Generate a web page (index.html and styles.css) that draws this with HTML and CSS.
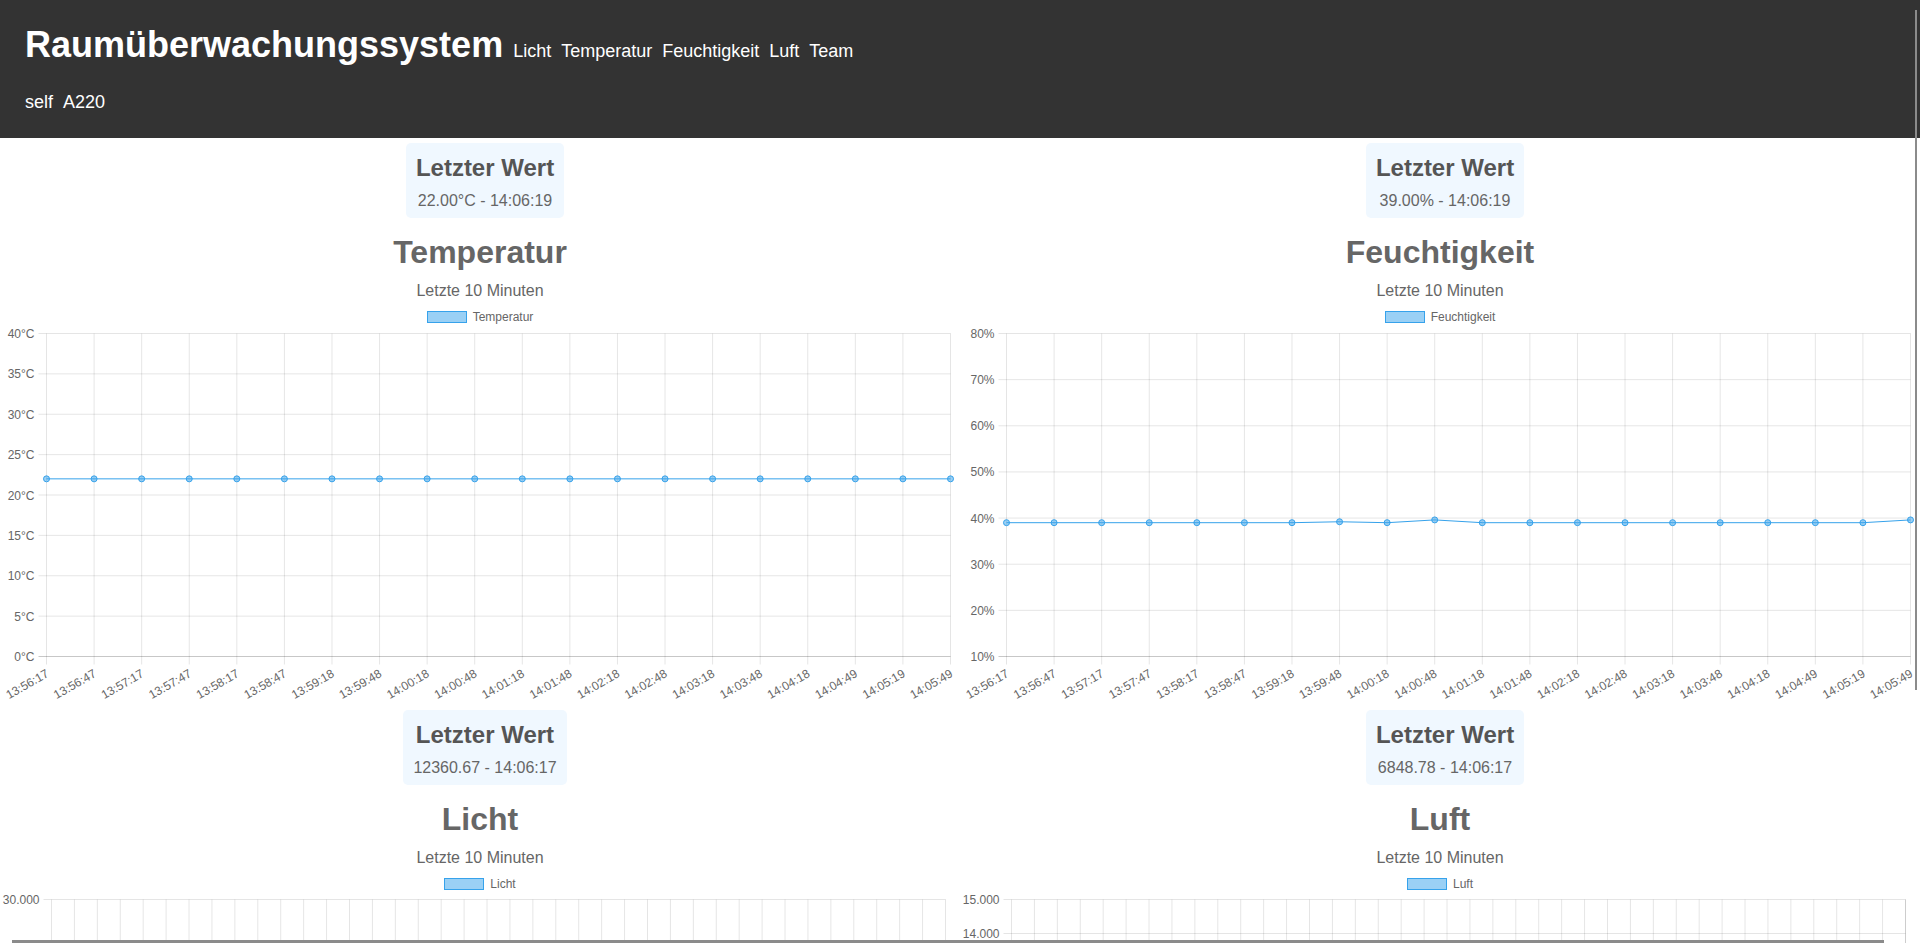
FILE: index.html
```html
<!DOCTYPE html>
<html lang="de">
<head>
<meta charset="utf-8">
<title>Raumüberwachungssystem</title>
<link rel="stylesheet" href="styles.css">
</head>
<body>
<header class="topbar">
  <div class="topbar-row">
    <h1 class="brand">Raumüberwachungssystem</h1>
    <nav class="nav">
      <a href="#licht">Licht</a>
      <a href="#temperatur">Temperatur</a>
      <a href="#feuchtigkeit">Feuchtigkeit</a>
      <a href="#luft">Luft</a>
      <a href="#team">Team</a>
    </nav>
  </div>
  <div class="topbar-row topbar-sub">
    <a href="#self">self</a>
    <a href="#a220">A220</a>
  </div>
</header>
<main class="dashboard">
  <section class="panel" id="temperatur">
    <div class="latest"><h3>Letzter Wert</h3><p>22.00°C - 14:06:19</p></div>
    <h2 class="chart-title">Temperatur</h2>
    <p class="chart-sub">Letzte 10 Minuten</p>
    <div class="legend"><span class="swatch"></span><span>Temperatur</span></div>
    <svg class="chart" id="chart-temp" viewBox="0 0 960 381" width="960" height="381"></svg>
  </section>
  <section class="panel" id="feuchtigkeit">
    <div class="latest"><h3>Letzter Wert</h3><p>39.00% - 14:06:19</p></div>
    <h2 class="chart-title">Feuchtigkeit</h2>
    <p class="chart-sub">Letzte 10 Minuten</p>
    <div class="legend"><span class="swatch"></span><span>Feuchtigkeit</span></div>
    <svg class="chart" id="chart-hum" viewBox="0 0 960 381" width="960" height="381"></svg>
  </section>
  <section class="panel" id="licht">
    <div class="latest"><h3>Letzter Wert</h3><p>12360.67 - 14:06:17</p></div>
    <h2 class="chart-title">Licht</h2>
    <p class="chart-sub">Letzte 10 Minuten</p>
    <div class="legend"><span class="swatch"></span><span>Licht</span></div>
    <svg class="chart chart-clipped" id="chart-licht" viewBox="0 0 960 52" width="960" height="52"></svg>
  </section>
  <section class="panel" id="luft">
    <div class="latest"><h3>Letzter Wert</h3><p>6848.78 - 14:06:17</p></div>
    <h2 class="chart-title">Luft</h2>
    <p class="chart-sub">Letzte 10 Minuten</p>
    <div class="legend"><span class="swatch"></span><span>Luft</span></div>
    <svg class="chart chart-clipped" id="chart-luft" viewBox="0 0 960 52" width="960" height="52"></svg>
  </section>
</main>
<div class="scroll-thumb scroll-v"></div>
<div class="scroll-thumb scroll-h"></div>
<script src="app.js"></script>
</body>
</html>
```

FILE: styles.css
```css
html {
  overflow: hidden;
}
body {
  margin: 0;
  font-family: "Liberation Sans", Arial, sans-serif;
  background: #fff;
  color: #666;
}
.topbar {
  background: #333;
  color: #fff;
  padding: 20px 25px 24px;
  height: 138px;
  box-sizing: border-box;
}
.topbar-row {
  display: flex;
  align-items: baseline;
}
.brand {
  margin: 0;
  font-size: 36px;
  line-height: 50px;
  font-weight: bold;
}
.nav {
  display: flex;
  gap: 10px;
  margin-left: 10px;
}
.topbar a {
  color: #fff;
  text-decoration: none;
  font-size: 18px;
  line-height: 24px;
}
.topbar-sub {
  margin-top: 20px;
  gap: 10px;
}
.dashboard {
  display: grid;
  grid-template-columns: 960px 960px;
}
.panel {
  display: flex;
  flex-direction: column;
  align-items: center;
}
.latest {
  margin: 5px 0 0 10px;
  padding: 10px 10px 6px;
  background: #f0f8ff;
  border-radius: 5px;
  text-align: center;
}
.latest h3 {
  margin: 0;
  font-size: 24px;
  line-height: 30px;
  font-weight: bold;
  color: #555;
}
.latest p {
  margin: 6px 0 0;
  font-size: 16px;
  line-height: 23px;
  color: #666;
}
.chart-title {
  margin: 16px 0 0;
  font-size: 32px;
  line-height: 36px;
  font-weight: bold;
  color: #666;
}
.chart-sub {
  margin: 11px 0 0;
  font-size: 16px;
  line-height: 20px;
  color: #666;
}
.legend {
  margin-top: 9px;
  height: 14px;
  display: flex;
  align-items: center;
  gap: 6px;
  font-size: 12px;
  line-height: 14px;
  color: #666;
}
.swatch {
  width: 40px;
  height: 12px;
  box-sizing: border-box;
  border: 1px solid #36a2eb;
  background: rgba(54, 162, 235, 0.5);
}
.chart {
  display: block;
  align-self: stretch;
  width: 960px;
  height: 381px;
  overflow: visible;
}
.chart-clipped {
  height: 52px;
  overflow: hidden;
}
.tick {
  font-family: "Liberation Sans", Arial, sans-serif;
  font-size: 12px;
  fill: #666;
}
.scroll-thumb {
  position: fixed;
  background: #8b8b8b;
}
.scroll-v {
  left: 1915px;
  top: 10px;
  width: 2px;
  height: 680px;
}
.scroll-h {
  left: 12px;
  top: 940px;
  width: 1872px;
  height: 3px;
}
```

FILE: app.js
```js
(function () {
  var NS = 'http://www.w3.org/2000/svg';
  var GRID = 'rgba(0,0,0,0.1)';
  var AXIS = 'rgba(0,0,0,0.22)';
  var BLUE = 'rgb(54,162,235)';
  var FILL = 'rgba(54,162,235,0.5)';

  function mk(parent, tag, attrs, text) {
    var e = document.createElementNS(NS, tag);
    for (var k in attrs) e.setAttribute(k, attrs[k]);
    if (text != null) e.textContent = text;
    parent.appendChild(e);
    return e;
  }

  function thousands(v) {
    return String(v).replace(/\B(?=(\d{3})+(?!\d))/g, '.');
  }

  function draw(id, c) {
    var svg = document.getElementById(id);
    var viewH = c.viewH || Infinity;
    var n = c.data.length;
    var dx = (c.right - c.left) / (n - 1);
    var steps = Math.round((c.max - c.min) / c.step);
    function yOf(v) {
      return c.top + (c.max - v) / (c.max - c.min) * (c.bottom - c.top);
    }
    var grid = mk(svg, 'g', {});
    for (var s = 0; s <= steps; s++) {
      var v = c.max - s * c.step;
      var y = c.top + s * (c.bottom - c.top) / steps;
      if (y > viewH) break;
      mk(grid, 'line', {
        x1: c.left - 8, x2: c.right, y1: y, y2: y,
        stroke: s === steps ? AXIS : GRID, 'stroke-width': 1
      });
      if (y + 7 <= viewH) {
        mk(svg, 'text', {
          x: c.left - 12, y: y + 0.5, 'text-anchor': 'end',
          'dominant-baseline': 'central', 'class': 'tick'
        }, c.fmt(v));
      }
    }
    var bottom = Math.min(c.bottom + 8, viewH);
    for (var i = 0; i < n; i++) {
      var x = c.left + i * dx;
      mk(grid, 'line', {
        x1: x, x2: x, y1: c.top, y2: bottom,
        stroke: GRID, 'stroke-width': 1
      });
      if (c.labels) {
        mk(svg, 'text', {
          x: 0, y: 0, 'text-anchor': 'end', 'dominant-baseline': 'central',
          'class': 'tick',
          transform: 'translate(' + (x + 1) + ',' + (c.bottom + 16) + ') rotate(-30)'
        }, c.labels[i]);
      }
    }
    if (c.border) {
      mk(grid, 'line', {
        x1: c.right, x2: c.right, y1: c.top, y2: bottom,
        stroke: GRID, 'stroke-width': 1
      });
    }
    var pts = c.data.map(function (v, i) { return [c.left + i * dx, yOf(v)]; })
      .filter(function (p) { return p[1] < viewH; });
    if (pts.length) {
      mk(svg, 'polyline', {
        points: pts.map(function (p) { return p[0].toFixed(2) + ',' + p[1].toFixed(2); }).join(' '),
        fill: 'none', stroke: BLUE, 'stroke-width': 1
      });
      pts.forEach(function (p) {
        mk(svg, 'circle', { cx: p[0], cy: p[1], r: 3, fill: FILL, stroke: BLUE, 'stroke-width': 1 });
      });
    }
  }

  var times = ['13:56:17', '13:56:47', '13:57:17', '13:57:47', '13:58:17', '13:58:47',
    '13:59:18', '13:59:48', '14:00:18', '14:00:48', '14:01:18', '14:01:48', '14:02:18',
    '14:02:48', '14:03:18', '14:03:48', '14:04:18', '14:04:49', '14:05:19', '14:05:49'];

  var temp = times.map(function () { return 22; });
  var hum = [39, 39, 39, 39, 39, 39, 39, 39.2, 39, 39.6, 39, 39, 39, 39, 39, 39, 39, 39, 39, 39.6];

  var licht = [];
  var luft = [];
  for (var i = 0; i < 40; i++) {
    licht.push(12000 + Math.round(Math.sin(i * 0.7) * 600));
    luft.push(6800 + Math.round(Math.cos(i * 0.5) * 150));
  }

  draw('chart-temp', {
    left: 46.5, right: 950.5, top: 9.5, bottom: 332.5,
    max: 40, min: 0, step: 5, data: temp, labels: times,
    fmt: function (v) { return v + '°C'; }
  });
  draw('chart-hum', {
    left: 46.5, right: 950.5, top: 9.5, bottom: 332.5,
    max: 80, min: 10, step: 10, data: hum, labels: times,
    fmt: function (v) { return v + '%'; }
  });
  draw('chart-licht', {
    left: 51.5, right: 945.5, top: 8.5, bottom: 348.5, viewH: 52,
    max: 30000, min: 0, step: 5000, data: licht, labels: null,
    fmt: thousands
  });
  draw('chart-luft', {
    left: 51.5, right: 945.5, top: 8.5, bottom: 348.5, viewH: 52,
    max: 15000, min: 5000, step: 1000, data: luft, labels: null, border: true,
    fmt: thousands
  });
})();
```
